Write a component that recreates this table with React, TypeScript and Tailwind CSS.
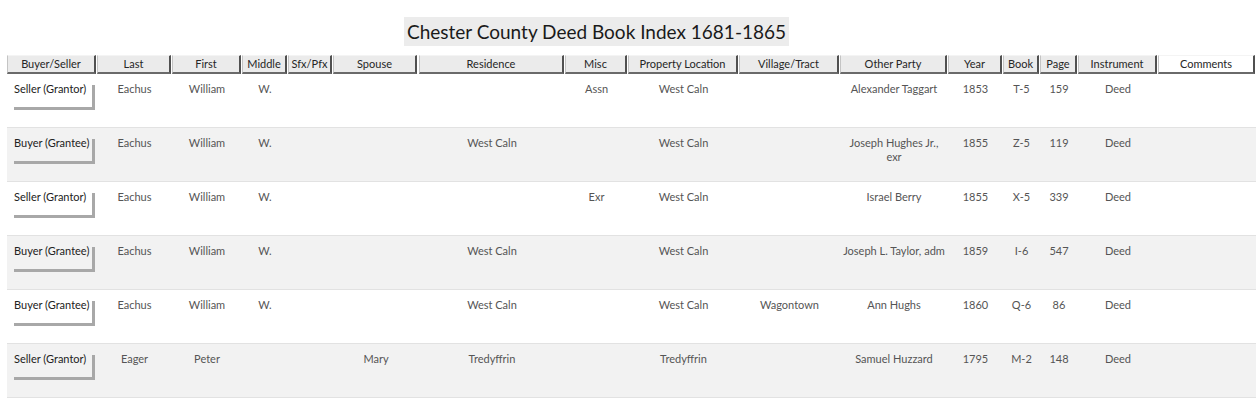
const font = { fontFamily: 'Lato, "Open Sans", sans-serif' }

type Row = {
  role: string
  last: string
  first: string
  middle: string
  sfx: string
  spouse: string
  residence: string
  misc: string
  prop: string
  village: string
  other: string[]
  year: string
  book: string
  page: string
  inst: string
  comments: string
}

const headers = [
  'Buyer/Seller', 'Last', 'First', 'Middle', 'Sfx/Pfx', 'Spouse', 'Residence', 'Misc',
  'Property Location', 'Village/Tract', 'Other Party', 'Year', 'Book', 'Page', 'Instrument', 'Comments',
]

const rows: Row[] = [
  { role: 'Seller (Grantor)', last: 'Eachus', first: 'William', middle: 'W.', sfx: '', spouse: '', residence: '', misc: 'Assn', prop: 'West Caln', village: '', other: ['Alexander Taggart'], year: '1853', book: 'T-5', page: '159', inst: 'Deed', comments: '' },
  { role: 'Buyer (Grantee)', last: 'Eachus', first: 'William', middle: 'W.', sfx: '', spouse: '', residence: 'West Caln', misc: '', prop: 'West Caln', village: '', other: ['Joseph Hughes Jr.,', 'exr'], year: '1855', book: 'Z-5', page: '119', inst: 'Deed', comments: '' },
  { role: 'Seller (Grantor)', last: 'Eachus', first: 'William', middle: 'W.', sfx: '', spouse: '', residence: '', misc: 'Exr', prop: 'West Caln', village: '', other: ['Israel Berry'], year: '1855', book: 'X-5', page: '339', inst: 'Deed', comments: '' },
  { role: 'Buyer (Grantee)', last: 'Eachus', first: 'William', middle: 'W.', sfx: '', spouse: '', residence: 'West Caln', misc: '', prop: 'West Caln', village: '', other: ['Joseph L. Taylor, adm'], year: '1859', book: 'I-6', page: '547', inst: 'Deed', comments: '' },
  { role: 'Buyer (Grantee)', last: 'Eachus', first: 'William', middle: 'W.', sfx: '', spouse: '', residence: 'West Caln', misc: '', prop: 'West Caln', village: 'Wagontown', other: ['Ann Hughs'], year: '1860', book: 'Q-6', page: '86', inst: 'Deed', comments: '' },
  { role: 'Seller (Grantor)', last: 'Eager', first: 'Peter', middle: '', sfx: '', spouse: 'Mary', residence: 'Tredyffrin', misc: '', prop: 'Tredyffrin', village: '', other: ['Samuel Huzzard'], year: '1795', book: 'M-2', page: '148', inst: 'Deed', comments: '' },
]

const grid =
  'grid grid-cols-[90px_75px_70px_46px_45px_86px_146px_63px_111px_101px_108px_55px_37px_38px_80px_98px]'

function Cell({ lines }: { lines: string[] }) {
  return (
    <div className="pt-[8px] text-center text-[11px] leading-[14px] text-[#555]">
      {lines.map((l, i) => (
        <div key={i} className="whitespace-nowrap">{l}</div>
      ))}
    </div>
  )
}

export default function App() {
  return (
    <div className="w-[1260px] h-[399px] bg-white overflow-hidden" style={font}>
      <div className="pt-[17px] pl-[404px]">
        <div className="inline-block bg-[#ececec] px-[3px] h-[29px] text-[19px] leading-[29px] text-[#1a1a1a]">
          Chester County Deed Book Index 1681-1865
        </div>
      </div>

      <div className="pl-[7px] pt-[9px]">
        <div className={`${grid} h-[19px]`}>
          {headers.map((h, i) => (
            <div key={h} className={i === 5 ? 'pr-[2px]' : 'pr-px'}>
              <div
                className={`h-[19px] border-t border-l border-t-[#f4f4f4] border-l-[#c4c4c4] border-r-2 border-b-2 border-r-[#505050] border-b-[#6a6a6a] text-center text-[11px] leading-[15px] text-[#262626] whitespace-nowrap ${
                  h === 'Comments' ? 'bg-white' : 'bg-[#ebebeb]'
                }`}
              >
                {h}
              </div>
            </div>
          ))}
        </div>

        {rows.map((r, idx) => (
          <div
            key={idx}
            className={`${grid} w-[1249px] h-[54px] border-b border-[#e2e2e2] ${idx % 2 ? 'bg-[#f2f2f2]' : 'bg-white'}`}
          >
            <div className="pt-[8px] pl-[4px]">
              <div className="w-[81px] h-[25px] shadow-[3px_3px_0_#a8a8a8] pl-[3px] text-[11px] leading-[14px] text-[#222] whitespace-nowrap">
                {r.role}
              </div>
            </div>
            <Cell lines={[r.last]} />
            <Cell lines={[r.first]} />
            <Cell lines={[r.middle]} />
            <Cell lines={[r.sfx]} />
            <Cell lines={[r.spouse]} />
            <Cell lines={[r.residence]} />
            <Cell lines={[r.misc]} />
            <Cell lines={[r.prop]} />
            <Cell lines={[r.village]} />
            <Cell lines={r.other} />
            <Cell lines={[r.year]} />
            <Cell lines={[r.book]} />
            <Cell lines={[r.page]} />
            <Cell lines={[r.inst]} />
            <Cell lines={[r.comments]} />
          </div>
        ))}
      </div>
    </div>
  )
}
